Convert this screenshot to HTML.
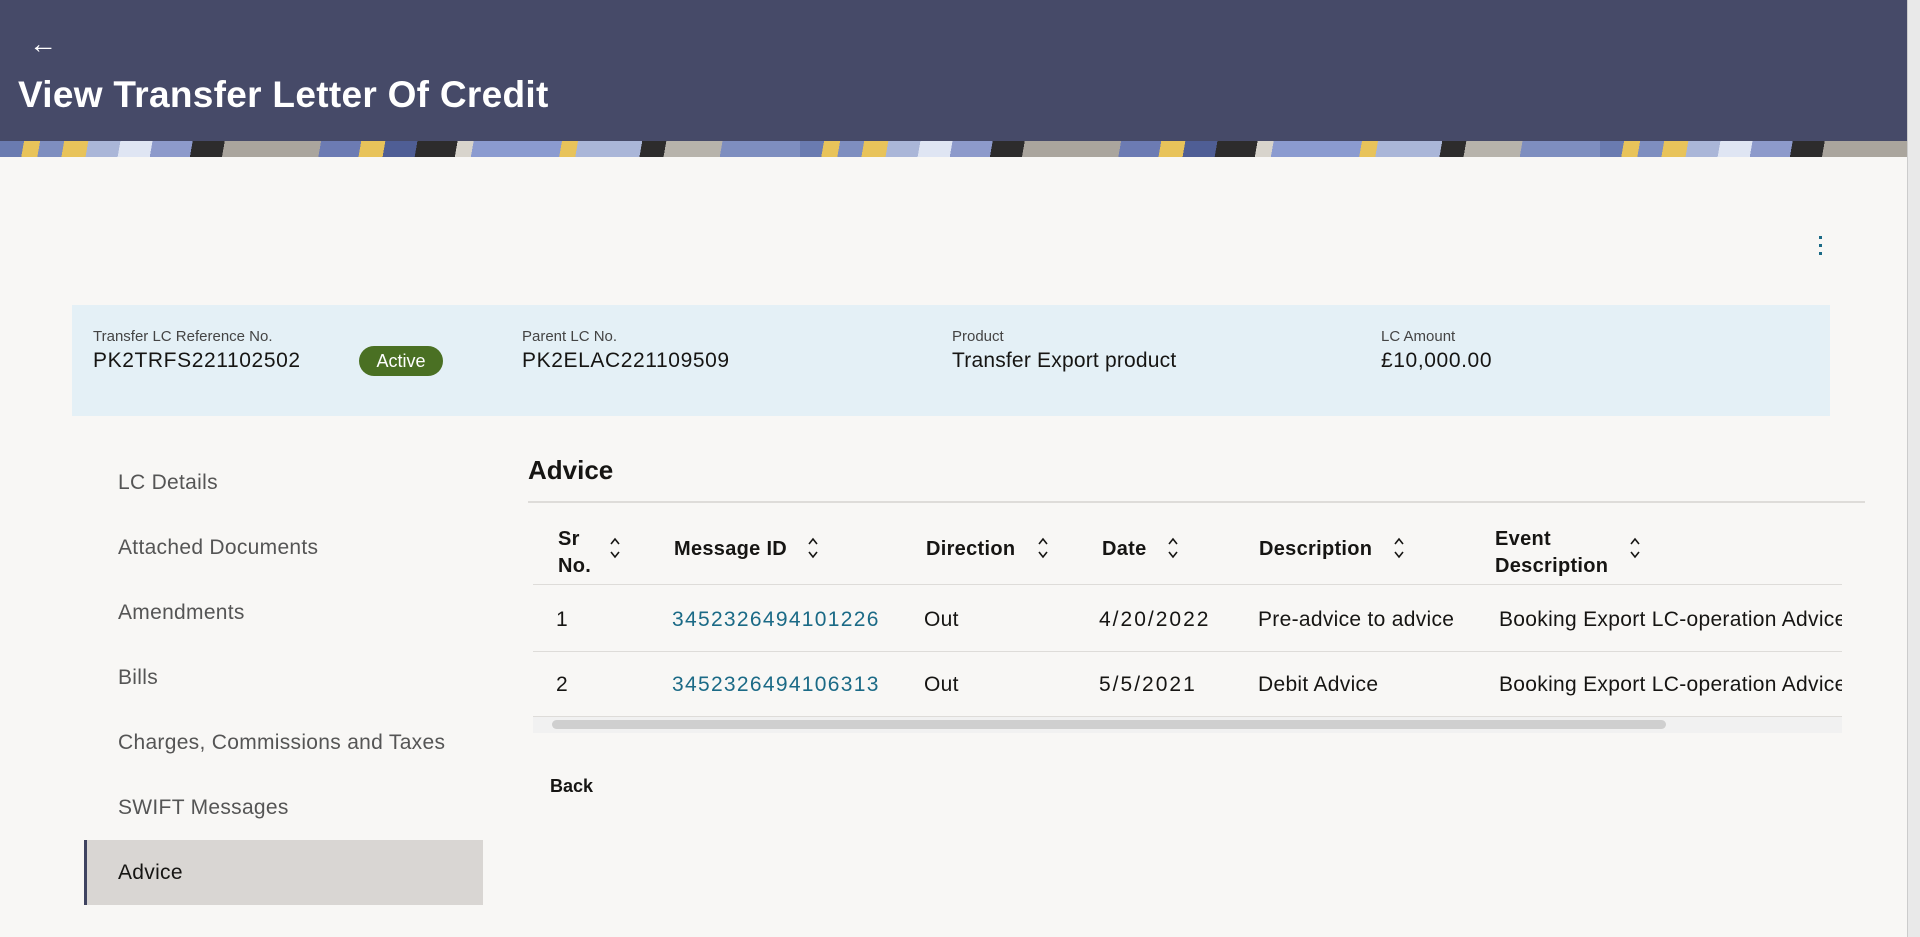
<!DOCTYPE html>
<html><head><meta charset="utf-8"><style>
*{margin:0;padding:0;box-sizing:border-box}
body{width:1920px;height:937px;overflow:hidden;background:#f8f7f5;font-family:"Liberation Sans",sans-serif;position:relative;color:#161513}
.a{position:absolute;white-space:nowrap}
.hdr{left:0;top:0;width:1907px;height:141px;background:#464a68}
.ban{left:0;top:141px;width:1907px;height:16px;background:linear-gradient(100deg,#6a7bb0 0 3%,#e8c35a 3% 5%,#7e8ebf 5% 8%,#e8c35a 8% 11%,#aab6d8 11% 15%,#dfe5f3 15% 19%,#8d9acb 19% 24%,#2d2c2c 24% 28%,#aaa59d 28% 40%,#6c7bb3 40% 45%,#e8c35a 45% 48%,#4f5e95 48% 52%,#2d2c2c 52% 57%,#d8d4cc 57% 59%,#8b9bd0 59% 70%,#e8c35a 70% 72%,#aab6d8 72% 80%,#2d2c2c 80% 83%,#b7b3ab 83% 90%,#7e8ebf 90% 100%);background-size:800px 16px}
.sb{left:1907px;top:0;width:13px;height:937px;background:#e9e9e9;border-left:1px solid #ccc}
.lbl{font-size:15px;color:#444}
.val{font-size:21px;color:#161513;letter-spacing:0.6px}
.nav{font-size:21px;color:#555;left:118px;letter-spacing:0.3px}
.th{font-size:20px;font-weight:bold;color:#161513;letter-spacing:0.3px}
.td{font-size:21px;color:#161513;letter-spacing:0.3px}
.lk{color:#1b6a86;letter-spacing:1.3px}
.dt{letter-spacing:2px}
.srt{width:14px;height:26px}
</style></head><body>
<div class="a hdr"></div>
<div class="a ban"></div>
<div class="a sb"></div>
<div class="a" style="left:29px;top:28px;color:#fff;font-size:28px;font-weight:bold">&#8592;</div>
<div class="a" style="left:18px;top:74px;color:#fff;font-size:37px;font-weight:bold;letter-spacing:0.3px">View Transfer Letter Of Credit</div>
<div class="a" style="left:1819px;top:236px;width:4px;height:22px">
<div style="width:3px;height:3px;background:#1b6a86;margin-bottom:5px"></div><div style="width:3px;height:3px;background:#1b6a86;margin-bottom:5px"></div><div style="width:3px;height:3px;background:#1b6a86"></div></div>

<div class="a" style="left:72px;top:305px;width:1758px;height:111px;background:#e4f0f6"></div>
<div class="a lbl" style="left:93px;top:328px">Transfer LC Reference No.</div>
<div class="a val" style="left:93px;top:349px">PK2TRFS221102502</div>
<div class="a" style="left:359px;top:346px;width:84px;height:30px;border-radius:15px;background:#4a7023;color:#fff;font-size:18px;text-align:center;line-height:30px">Active</div>
<div class="a lbl" style="left:522px;top:328px">Parent LC No.</div>
<div class="a val" style="left:522px;top:349px">PK2ELAC221109509</div>
<div class="a lbl" style="left:952px;top:328px">Product</div>
<div class="a val" style="left:952px;top:349px;letter-spacing:0.2px">Transfer Export product</div>
<div class="a lbl" style="left:1381px;top:328px">LC Amount</div>
<div class="a val" style="left:1381px;top:349px">£10,000.00</div>

<div class="a nav" style="top:471px">LC Details</div>
<div class="a nav" style="top:536px">Attached Documents</div>
<div class="a nav" style="top:601px">Amendments</div>
<div class="a nav" style="top:666px">Bills</div>
<div class="a nav" style="top:731px">Charges, Commissions and Taxes</div>
<div class="a nav" style="top:796px">SWIFT Messages</div>
<div class="a" style="left:84px;top:840px;width:399px;height:65px;background:#d9d6d3;border-left:3px solid #3f4360"></div>
<div class="a nav" style="top:861px;color:#161513">Advice</div>

<div class="a" style="left:528px;top:455px;font-size:26px;font-weight:bold">Advice</div>
<div class="a" style="left:528px;top:501px;width:1337px;height:2px;background:#dedcd9"></div>

<div class="a th" style="left:558px;top:526px;line-height:27px">Sr<br>No.</div>
<div class="a th" style="left:674px;top:538px">Message ID</div>
<div class="a th" style="left:926px;top:538px">Direction</div>
<div class="a th" style="left:1102px;top:538px">Date</div>
<div class="a th" style="left:1259px;top:538px">Description</div>
<div class="a th" style="left:1495px;top:526px;line-height:27px">Event<br>Description</div>
<svg class="a srt" style="left:608px;top:535px" viewBox="0 0 14 26"><path d="M3 9l4-5 4 5M3 17l4 5 4-5" fill="none" stroke="#161513" stroke-width="1.6"/></svg>
<svg class="a srt" style="left:806px;top:535px" viewBox="0 0 14 26"><path d="M3 9l4-5 4 5M3 17l4 5 4-5" fill="none" stroke="#161513" stroke-width="1.6"/></svg>
<svg class="a srt" style="left:1036px;top:535px" viewBox="0 0 14 26"><path d="M3 9l4-5 4 5M3 17l4 5 4-5" fill="none" stroke="#161513" stroke-width="1.6"/></svg>
<svg class="a srt" style="left:1166px;top:535px" viewBox="0 0 14 26"><path d="M3 9l4-5 4 5M3 17l4 5 4-5" fill="none" stroke="#161513" stroke-width="1.6"/></svg>
<svg class="a srt" style="left:1392px;top:535px" viewBox="0 0 14 26"><path d="M3 9l4-5 4 5M3 17l4 5 4-5" fill="none" stroke="#161513" stroke-width="1.6"/></svg>
<svg class="a srt" style="left:1628px;top:535px" viewBox="0 0 14 26"><path d="M3 9l4-5 4 5M3 17l4 5 4-5" fill="none" stroke="#161513" stroke-width="1.6"/></svg>
<div class="a" style="left:533px;top:584px;width:1309px;height:1px;background:#dedcd9"></div>

<div class="a" style="left:533px;top:608px;width:1309px;height:28px;overflow:hidden">
<span class="a td" style="left:23px;top:0">1</span>
<span class="a td lk" style="left:139px;top:0">3452326494101226</span>
<span class="a td" style="left:391px;top:0">Out</span>
<span class="a td dt" style="left:566px;top:0">4/20/2022</span>
<span class="a td" style="left:725px;top:0">Pre-advice to advice</span>
<span class="a td" style="left:966px;top:0">Booking Export LC-operation Advice</span>
</div>
<div class="a" style="left:533px;top:651px;width:1309px;height:1px;background:#dedcd9"></div>
<div class="a" style="left:533px;top:673px;width:1309px;height:28px;overflow:hidden">
<span class="a td" style="left:23px;top:0">2</span>
<span class="a td lk" style="left:139px;top:0">3452326494106313</span>
<span class="a td" style="left:391px;top:0">Out</span>
<span class="a td dt" style="left:566px;top:0">5/5/2021</span>
<span class="a td" style="left:725px;top:0">Debit Advice</span>
<span class="a td" style="left:966px;top:0">Booking Export LC-operation Advice</span>
</div>
<div class="a" style="left:533px;top:716px;width:1309px;height:1px;background:#dedcd9"></div>
<div class="a" style="left:533px;top:717px;width:1309px;height:16px;background:#f1f1f1"></div>
<div class="a" style="left:552px;top:720px;width:1114px;height:9px;border-radius:5px;background:#cfcfcf"></div>
<div class="a" style="left:550px;top:776px;font-size:18px;font-weight:bold;color:#161513">Back</div>
</body></html>
